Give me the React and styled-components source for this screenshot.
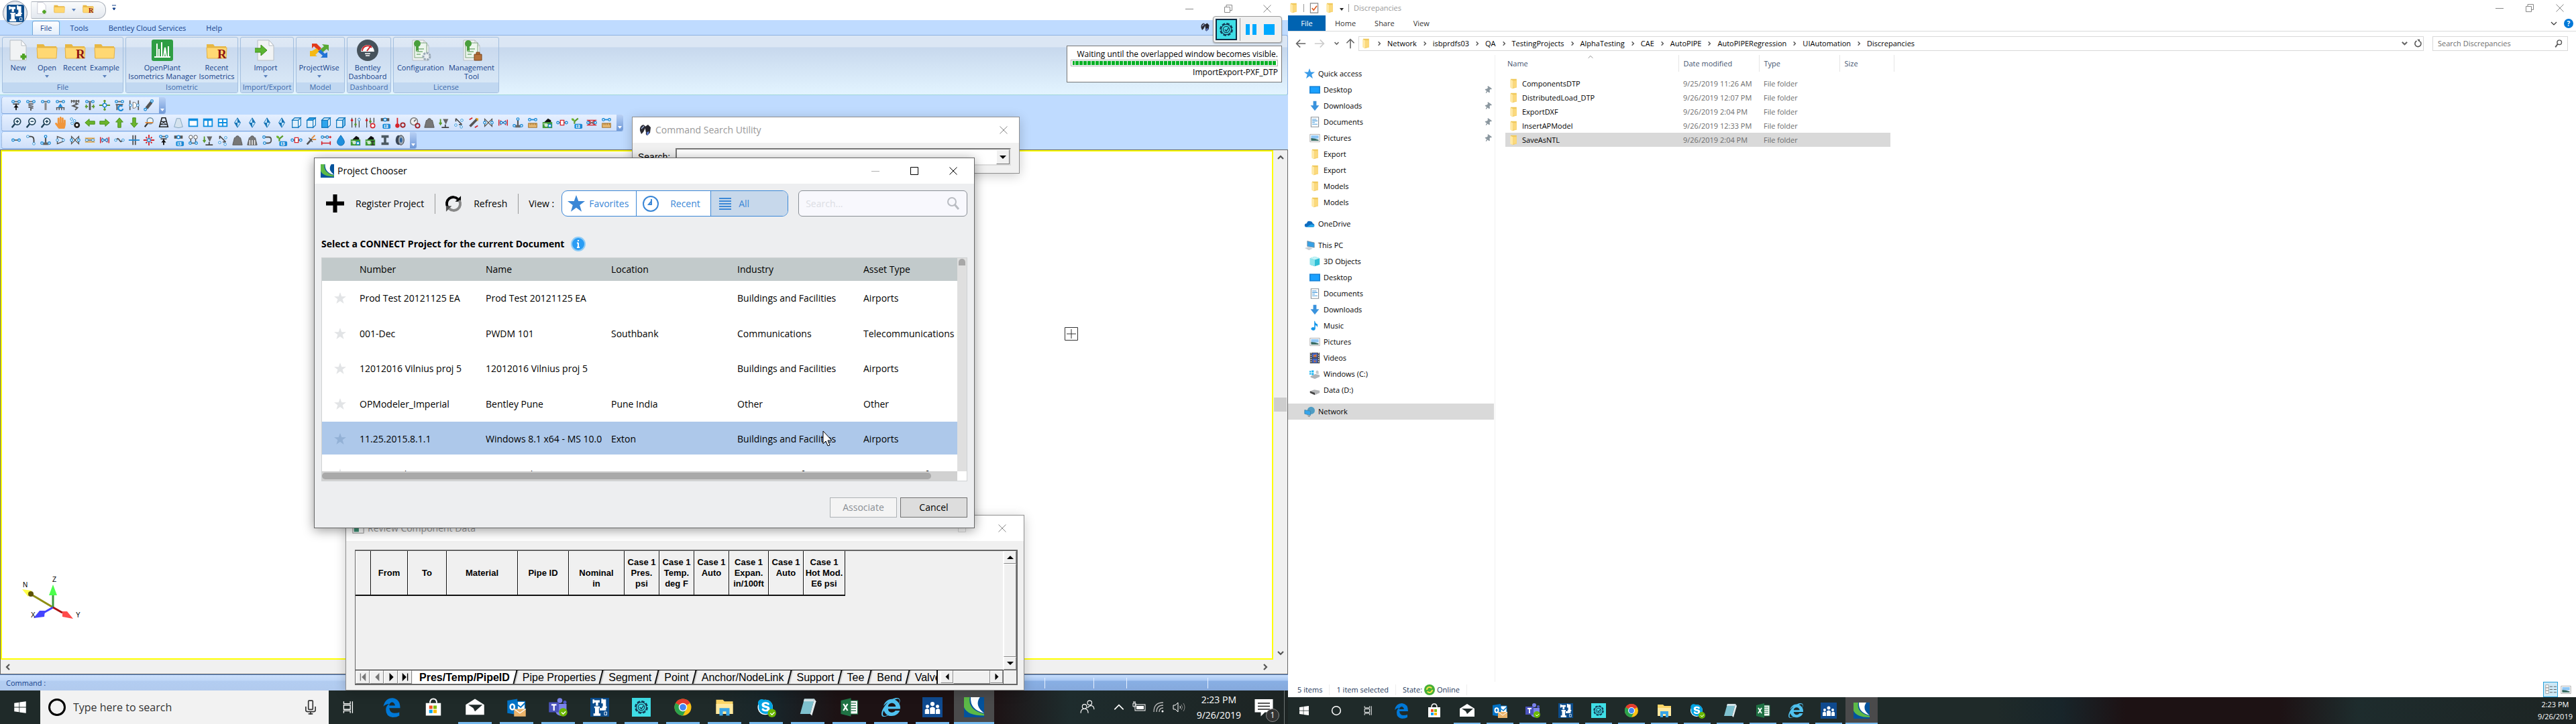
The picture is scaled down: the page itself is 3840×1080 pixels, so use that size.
import React from "react";
import styled, { createGlobalStyle, css } from "styled-components";
import { FaEdge, FaInternetExplorer, FaSkype, FaWindows, FaHandPaper, FaThumbtack } from "react-icons/fa";

const UI = `"Open Sans", "Noto Sans", sans-serif`;
const ARIAL = `"Liberation Sans", Arial, sans-serif`;

const Global = createGlobalStyle`
  *, *::before, *::after { box-sizing: border-box; }
  body { margin: 0; font-family: ${UI}; font-size: 11px; line-height: 16px; color: #000; overflow: hidden; }
  button, input { font: inherit; color: inherit; margin: 0; padding: 0; border: 0; background: none; border-radius: 0; outline: none; }
  button { cursor: default; display: inline-flex; align-items: center; justify-content: center; white-space: nowrap; }
  a { color: inherit; text-decoration: none; }
  svg { display: block; flex: none; }
`;

/* ---------- glyph helpers ---------- */

const BLUE = "#1b8ad6";
const Svg = ({ s = 20, v = 20, children, ...p }) => (
  <svg width={s} height={s} viewBox={`0 0 ${v} ${v}`} fill="none" aria-hidden="true" {...p}>{children}</svg>
);
const Nodes = ({ y = 10, c = "#666", a = 5, b = 15 }) => (
  <g>
    <path d={`M${a} ${y}H${b}`} stroke={c} strokeWidth="2" />
    <circle cx={a} cy={y} r="2" fill="#fff" stroke={BLUE} strokeWidth="1.5" />
    <circle cx={b} cy={y} r="2" fill="#fff" stroke={BLUE} strokeWidth="1.5" />
  </g>
);
const P = ({ d, c = "#555", w = 1.6, f = "none" }) => <path d={d} stroke={c} strokeWidth={w} fill={f} />;
const Info = () => (
  <g>
    <rect x="6" y="12" width="13" height="8" rx="2" fill={BLUE} />
    <text x="8" y="19" fontSize="8" fontWeight="700" fill="#fff" fontFamily="Open Sans, sans-serif">i3</text>
  </g>
);
const Magnifier = ({ sign }) => (
  <g>
    <circle cx="12" cy="8" r="5.5" stroke="#1d3f55" strokeWidth="1.8" fill="#eaf6ff" />
    <P d="M8 12L3 18" c="#1d3f55" w={2.6} />
    <P d={sign === "-" ? "M9.5 8h5" : "M9.5 8h5M12 5.500v5"} c="#1d3f55" w={1.6} />
  </g>
);
const Arrow = ({ r = 0 }) => (
  <path transform={`rotate(${r} 10 10)`} d="M2 10L9 4v3.500h9v5H9V16z" fill="#6cb52d" stroke="#3f8a14" />
);
const Weight = ({ c = "#777" }) => <path d="M7 6a3 3 0 1 1 6 0h2l3 12H2L5 6z" fill={c} stroke="#555" />;
const Gem = ({ r = 0 }) => (
  <g transform={`rotate(${r} 10 10)`}>
    <path d="M10 2l5 8-5 8-5-8z" fill="#bfe3fb" stroke="#1673b5" />
    <path d="M10 2l5 8h-5zM10 10v8L5 10z" fill="#1673b5" />
  </g>
);
const Cube = ({ face }) => (
  <g stroke="#0f77bd" strokeWidth="1.3" fill="#dff0fc">
    <path d="M3 6l4-4h10v12l-4 4H3z" />
    <path d="M3 6h10v12H3z" fill={face === "front" ? "#2ea5ec" : "#dff0fc"} />
    <path d="M3 6l4-4h10l-4 4z" fill={face === "top" ? "#2ea5ec" : "#dff0fc"} />
    <path d="M13 6l4-4v12l-4 4z" fill={face === "side" ? "#7cc4ee" : "#fff"} />
  </g>
);
const Win = ({ split }) => (
  <g>
    <rect x="2" y="3" width="16" height="14" fill="#0b8de0" />
    {split === 0 && <rect x="4" y="7" width="12" height="8" fill="#fff" />}
    {split === 1 && <path d="M4 7h5v8H4zM11 7h5v8h-5z" fill="#fff" />}
    {split === 2 && <path d="M4 5h5v4H4zM11 5h5v4h-5zM4 11h5v4H4zM11 11h5v4h-5z" fill="#fff" />}
  </g>
);
const Plant = () => (
  <g>
    <P d="M6 12V6M6 8l6-5" c="#5a9a2b" w={2.4} />
    <path d="M1 3q5-1 5 4Q1 8 1 3z" fill="#6cb52d" /><Info />
  </g>
);
const Yard = ({ tool }) => (
  <g>
    <path d="M5 9l6-6 5 3v4H5z" fill="#111" />
    <rect x="2" y="9" width="16" height="10" fill="#3f9a35" />
    <path d="M3 12h5" stroke="#fff" /><circle cx="8" cy="14" r="3" fill="#cfe8cf" />
    {tool ? <P d="M11 12h6M14 12v6M11 18h6" c="#333" w={1.8} /> : <circle cx="14" cy="15" r="2.500" fill="#fff" stroke={BLUE} strokeWidth="1.5" />}
  </g>
);
const Ruler = () => (
  <g>
    <Nodes y={5} c="#1b8ad6" />
    <rect x="3" y="11" width="14" height="7" fill="#e6b873" stroke="#9b6a22" />
    <P d="M6 11v3M9 11v3M12 11v3M15 11v3" c="#9b6a22" w={1} />
  </g>
);
const Valve = ({ c = "#555" }) => (
  <g>
    <path d="M4 4v12l12-12v12z" fill="#fff" stroke={c} strokeWidth="1.5" />
    <circle cx="4" cy="10" r="2" fill="#fff" stroke={BLUE} strokeWidth="1.4" /><circle cx="16" cy="10" r="2" fill="#fff" stroke={BLUE} strokeWidth="1.4" />
  </g>
);
const RedPipe = () => (
  <g><P d="M3 5v10M17 5v10M6 6v8M14 6v8" c="#d5232a" w={1.6} /><Nodes c="#d5232a" a={7} b={13} /></g>
);
const Twin = () => (
  <g>
    <P d="M2 7h16M2 13h16" c="#e39b2f" w={2} /><P d="M2 10h16" c="#777" w={2} />
    <circle cx="5" cy="10" r="2" fill="#fff" stroke={BLUE} /><circle cx="15" cy="10" r="2" fill="#fff" stroke={BLUE} />
  </g>
);
const Anchor = () => (
  <g><P d="M10 5v9" w={2.4} /><Nodes y={15} a={4} b={16} /><path d="M5 18l5-6 5 6z" fill="#666" /><circle cx="10" cy="4" r="2" fill="#fff" stroke={BLUE} strokeWidth="1.5" /></g>
);
const Sway = () => (
  <g><P d="M5 3l10 10M5 3v5M15 13h-5" c="#444" w={1.8} /><circle cx="5" cy="14" r="2" stroke={BLUE} fill="#fff" /><circle cx="15" cy="6" r="2" stroke={BLUE} fill="#fff" /><circle cx="14" cy="17" r="2" stroke={BLUE} fill="#fff" /></g>
);
const Drop = () => (
  <g><path d="M8 4h9l-4 9z" fill="#666" /><P d="M4 4v8M2 10l2 3 2-3" c="#5a9a2b" w={2} /><P d="M6 18h12M12 13v5" c="#444" w={2} /></g>
);
const Loop = () => (
  <g><P d="M6 5h7q4 0 4 5t-5 5H8" w={2} /><circle cx="5" cy="5" r="2" fill="#fff" stroke={BLUE} strokeWidth="1.4" /><circle cx="6" cy="15" r="2" fill="#fff" stroke={BLUE} strokeWidth="1.4" /></g>
);
const Tees = () => (
  <g><P d="M6 4v10M14 4v10" w={1.6} /><circle cx="6" cy="5" r="3" fill="#fff" stroke="#444" /><circle cx="14" cy="5" r="3" fill="#fff" stroke="#444" /><Nodes y={15} /></g>
);

const GLYPHS = {
  support: <g><Nodes y={4} /><P d="M10 7v5M5 8h10" c="#333" w={1.8} /><path d="M10 9l4 5h-3v4H9v-4H6z" fill="#111" /></g>,
  spring: <g><Nodes y={4} /><P d="M6 8h8M6 10l8 2M6 13l8 2M10 15v4" w={2} /></g>,
  rod: <g><Nodes y={4} /><P d="M10 6v12" c="#888" w={3.4} /></g>,
  guide: <g><Nodes y={4} /><path d="M10 7l4 6H6z" fill={BLUE} /><P d="M3 14h14M4 14v4M8 14v4M12 14v4M16 14v4" w={1.6} /></g>,
  hanger: <g><P d="M3 3h14M4 1v5M8 1v5M12 1v5M16 1v5" w={1.6} /><P d="M10 6l4 2-8 3 8 3-4 4" w={2} /></g>,
  limit: <g><Nodes y={4} /><P d="M10 5v13" w={3} /><P d="M2 12h5M13 12h5M4 9v6M16 9v6" c="#5a9a2b" w={2} /></g>,
  fourway: <g><P d="M10 1v6M10 13v6M1 10h6M13 10h6M8 3h4M8 17h4" c="#5a9a2b" w={2} /><circle cx="10" cy="10" r="3" fill="#fff" stroke={BLUE} strokeWidth="1.6" /></g>,
  hook: <g><Nodes y={4} /><P d="M4 9h12M6 9v9" w={2} /><path d="M15 12a4 4 0 1 0 1 4" stroke={BLUE} strokeWidth="2.4" /></g>,
  damper: <g><P d="M3 2v16M17 2v16" w={1.8} /><path d="M8 5q6 0 6 5t-6 5z" fill="#fff" stroke="#666" /><circle cx="4" cy="10" r="2" fill="#fff" stroke={BLUE} /><circle cx="16" cy="10" r="2" fill="#fff" stroke={BLUE} /></g>,
  strut: <g><P d="M6 15l8-10" w={5} /><circle cx="4" cy="17" r="2" fill="#fff" stroke={BLUE} strokeWidth="1.5" /><circle cx="15" cy="3" r="2" fill="#fff" stroke={BLUE} strokeWidth="1.5" /></g>,
  zoomin: <Magnifier sign="+" />, zoomout: <Magnifier sign="-" />,
  points: <g><circle cx="4" cy="4" r="2" stroke={BLUE} fill="#fff" /><circle cx="9" cy="7" r="2" stroke={BLUE} fill="#fff" /><circle cx="5" cy="11" r="2" stroke={BLUE} fill="#fff" /><circle cx="13" cy="14" r="5" fill="#222" /><circle cx="13" cy="14" r="2" fill="#fff" /></g>,
  left: <Arrow />, right: <Arrow r={180} />, up: <Arrow r={90} />, down: <Arrow r={270} />,
  orbit: <g><circle cx="12" cy="7" r="5" stroke="#6b8ca3" strokeWidth="1.6" fill="#eaf6ff" /><P d="M8 11l-5 6" c="#333" w={2.4} /><P d="M4 10h13" c="#e0812a" w={2} /></g>,
  frame: <g><P d="M7 2h6l4 15H3z" c="#222" w={1.8} /><P d="M5 8h10M4 13h12M7 8l7 5M13 8l-8 5" c="#222" w={1.2} /></g>,
  cone: <path d="M7 3h6l4 14q-7 3-14 0z" fill="#d5e3ee" stroke="#7fa3bd" />,
  w0: <Win split={0} />, w1: <Win split={1} />, w2: <Win split={2} />,
  g0: <Gem />, g1: <Gem r={180} />, cube: <Cube />, cubetop: <Cube face="top" />, cubefront: <Cube face="front" />, cubeside: <Cube face="side" />,
  sliders: <g><P d="M4 2v16M10 2v16M16 2v16" c="#444" w={1.4} /><circle cx="4" cy="6" r="2" fill="#d5232a" /><circle cx="10" cy="13" r="2" fill="#5a9a2b" /><circle cx="16" cy="5" r="2" fill="#fff" stroke={BLUE} /></g>,
  sliderspower: <g><P d="M4 2v16M10 2v10M16 2v8" c="#444" w={1.4} /><circle cx="4" cy="6" r="2" fill="#d5232a" /><circle cx="10" cy="8" r="2" fill="#5a9a2b" /><circle cx="14" cy="15" r="3.500" stroke="#d5232a" strokeWidth="1.8" fill="#fff" /></g>,
  pipeinfo: <g><P d="M3 5h14" w={5} /><circle cx="10" cy="5" r="2.500" fill="#fff" stroke={BLUE} strokeWidth="1.5" /><Info /></g>,
  thermo: <g><P d="M6 2v12" c="#d5232a" w={2} /><circle cx="6" cy="15" r="3.500" fill="#d5232a" /><circle cx="15" cy="14" r="3.500" stroke="#a01c20" strokeWidth="2" /></g>,
  gauge: <g><circle cx="9" cy="8" r="6" fill="#eee" stroke="#777" strokeWidth="1.6" /><P d="M9 8l3-3" /><circle cx="15" cy="15" r="3.500" stroke="#a01c20" strokeWidth="2" /></g>,
  weight: <Weight />, weights: <g><Weight /><P d="M6 10v8M10 10v8M14 10v8" c="#fff" w={1.4} /></g>, dropload: <Drop />, sway: <Sway />,
  shake: <g><P d="M4 16L16 4" w={4} /><P d="M3 5l5-3M12 18l5-3" c="#d5232a" w={2} /><path d="M13 2l5 1-1 5z" fill="#e9a11c" /></g>,
  valve: <Valve />, redpipe: <RedPipe />, anchor: <Anchor />, ruler: <Ruler />, yard: <Yard />, yardtool: <Yard tool />,
  boxlink: <g><Nodes a={3} b={17} /><rect x="7" y="6" width="6" height="8" fill="#fff" stroke="#d5232a" strokeWidth="1.4" /></g>,
  plant: <Plant />, rednet: <g><P d="M2 6h16M2 14h16M4 6l12 8M16 6L4 14" c="#d5232a" w={1.6} /><Nodes c="#777" a={4} b={16} /></g>,
  run: <Nodes a={5} b={15} />, bend: <g><P d="M3 4h7q5 0 5 6v6" c="#444" w={2} /><circle cx="5" cy="4" r="2" fill="#fff" stroke={BLUE} /><circle cx="15" cy="16" r="2" fill="#fff" stroke={BLUE} /></g>,
  reducer: <g><P d="M5 4l10 4v4L5 16z" /><circle cx="5" cy="10" r="2" fill="#fff" stroke={BLUE} /><circle cx="15" cy="10" r="2" fill="#fff" stroke={BLUE} /></g>,
  twin: <Twin />, flex: <g><P d="M5 10q2-5 5 0t5 0" w={2} /><circle cx="4" cy="10" r="2" fill="#fff" stroke={BLUE} /><circle cx="16" cy="10" r="2" fill="#fff" stroke={BLUE} /></g>,
  flange: <g><P d="M8 2v16M12 2v16" w={2} /><P d="M1 10h18" c={BLUE} w={2} /></g>,
  star: <g><P d="M10 1v6M10 13v6M1 10h6M13 10h6M5 5l2 2M15 5l-2 2M5 15l2-2M15 15l-2-2" c="#d5232a" w={2} /><circle cx="10" cy="10" r="2.500" stroke={BLUE} fill="#fff" strokeWidth="1.5" /></g>,
  tees: <Tees />, loop: <Loop />,
  spray: <g><P d="M3 17l8-9" w={3} /><P d="M11 7l5-5M12 9h6" c="#e0812a" w={2} /><P d="M6 6l6 7" /></g>,
  dim: <g><Nodes y={5} a={4} b={12} /><P d="M3 15h14M3 12v6M17 12v6" c="#d5232a" w={1.8} /><P d="M14 5h5M17 3v4" c="#d5232a" w={1.4} /></g>,
  water: <path d="M10 2q6 8 6 11a6 6 0 0 1-12 0q0-3 6-11z" fill="#1f8fdd" stroke="#0f6bb0" />,
  beam: <path d="M4 2h12v4h-4v8h4v4H4v-4h4V6H4z" fill="#4c5961" />,
  disc: <g><ellipse cx="8" cy="10" rx="5" ry="8" fill="#3c4a5c" /><ellipse cx="12" cy="10" rx="5" ry="8" fill="#9aa7b3" stroke="#333" /><ellipse cx="12" cy="10" rx="2" ry="4" fill="#2b62a0" /></g>,
};
const Hand = styled(FaHandPaper)`width: 16px; height: 18px; color: #f0963c;`;
const Glyph = ({ n }) => (n === "hand" ? <Hand /> : <Svg s={18}>{GLYPHS[n]}</Svg>);

const BentleyMark = ({ s }) => (
  <Svg s={s} v={24}>
    <rect width="24" height="24" fill="#03529c" />
    <path d="M0 0h7q-3 15 17 20v2Q4 22 0 12z" fill="#5cb947" />
    <path d="M8 0h11q-7 10 5 19Q7 15 8 0z" fill="#fff" />
  </Svg>
);
const PipeMark = ({ s }) => (
  <Svg s={s} v={24}>
    <rect width="24" height="24" fill="#0b4c8c" />
    <path d="M3 2h2v5H3zM3 3h9v3H3zM14 1h2v6h-2zM16 2h4v9h-4zM15 11h6v2h-6zM16 13h4v3h-8v-3h4zM7 6h3v4H7zM5 11h7v2H5zM6 13h5v7H6zM4 20h9v3H4z" fill="#fff" />
    <path d="M18 18h3v4h-3z" stroke="#fff" strokeWidth=".8" />
  </Svg>
);
const GearMark = ({ s }) => (
  <Svg s={s} v={24}>
    <rect width="24" height="24" fill="#3fdee6" />
    <circle cx="12" cy="12" r="7.500" stroke="#123a55" strokeWidth="2" strokeDasharray="3.900 2" />
    <circle cx="12" cy="12" r="6.500" stroke="#123a55" strokeWidth="1" />
    <circle cx="12" cy="12" r="4" stroke="#123a55" strokeWidth="1" />
    <path d="M10 12l2 2 3-4" stroke="#123a55" strokeWidth="1.2" />
  </Svg>
);
const Binoculars = ({ s = 18 }) => (
  <Svg s={s}>
    <path d="M2 11Q1 4 7 2l4 3-4 8-3 3z" fill="#2b2b33" /><path d="M10 9q-1-5 4-7l4 4-1 8-4 4q-3-1-2-4z" fill="#26262e" />
    <path d="M12 13l4-1-1 4-3 2z" fill="#5b78c8" /><path d="M4 8l4-4" stroke="#9fb3de" strokeWidth="1.5" />
  </Svg>
);
const Page = ({ children }) => (
  <Svg s={32} v={32}>
    <path d="M4 1h17l7 8v22H4z" fill="#f1f3f4" stroke="#b7bec4" /><path d="M21 1v8h7z" fill="#fff" stroke="#b7bec4" />{children}
  </Svg>
);
const BigFolder = ({ s = 32, r }) => (
  <Svg s={s} v={32}>
    <path d="M1 7h10l2 3h17v17H1z" fill="#e8b844" /><path d="M1 12h30l-1 16H2z" fill="#ffd873" stroke="#e2b24a" />
    {r && <text x="17" y="28" fontSize="19" fill="#8d1414" fontFamily="Liberation Serif, serif" fontWeight="700">R</text>}
  </Svg>
);
const License = ({ tool }) => (
  <Page>
    <rect x="7" y="5" width="18" height="22" stroke="#7ca37c" fill="#edf6ee" /><path d="M10 14h11M10 18h9M10 22h6" stroke="#7eb07e" strokeWidth="1.4" />
    <circle cx="11" cy="6" r="5" fill="#4a9f3c" /><path d="M9 10h4v8l-2-2-2 2z" fill="#4a9f3c" />
    {tool ? <path d="M20 22h11v9H20zM23 22v-3h5v3" fill="#b5713a" stroke="#7c4519" /> : <circle cx="25" cy="25" r="5" fill="#e8edf1" stroke="#98a7b5" strokeWidth="3" strokeDasharray="3 1.500" />}
  </Page>
);
const RIBBON = {
  new: <Page><path d="M24 21v9M19.500 25.500h9" stroke="#4fa324" strokeWidth="4" /></Page>,
  folder: <BigFolder />, folderR: <BigFolder r />,
  plant: <Svg s={32} v={32}><rect width="32" height="32" rx="3" fill="#2f9e44" /><path d="M4 26h24M8 26V6M11 26V14M15 26V4M18 26l2-14 2 14M25 26V10" stroke="#fff" strokeWidth="2" /></Svg>,
  import: <Page><path d="M-1 13h10V8l9 8-9 8v-5H-1z" fill="#5cb531" stroke="#3c8a18" /></Page>,
  pw: <Svg s={32} v={32}><path d="M5 6l7 0 7 7-4 4-7-7-3 3z" fill="#e23b1c" /><path d="M30 8v9l-3-3-7 6-4-4 7-6-3-3z" fill="#57a834" /><path d="M2 17l3 0 7-4 4 4-6 6 3 2H2z" fill="#f5b915" /><path d="M14 18l4-3 6 6 4-2v8h-10l3-3z" fill="#2273d6" /></Svg>,
  dash: <Svg s={32} v={32}><circle cx="16" cy="16" r="16" fill="#46525b" /><path d="M6 18a10 10 0 0 1 20 0z" fill="#fff" /><path d="M8 17a8 8 0 0 1 14-5" stroke="#cf2327" strokeWidth="2" /><path d="M15 17l6-8" stroke="#cf2327" strokeWidth="2" /><path d="M12 21h8M13 24h6" stroke="#fff" strokeWidth="1.500" /></Svg>,
  config: <License />, manage: <License tool />,
};

/* ---------- desktop ---------- */

const Desktop = styled.main`display: grid; grid-template-columns: 1fr 1fr; height: 100vh; background: #fff;`;
const Monitor = styled.section`position: relative; display: flex; flex-direction: column; min-width: 0; min-height: 0; overflow: hidden; background: ${(p) => p.$bg || "#fff"};`;

/* ---------- AutoPIPE main window ---------- */

const TitleStrip = styled.header`height: 30px; flex: none; display: flex; align-items: flex-start; justify-content: space-between; background: #fff; padding-left: 46px;`;
const QuickBar = styled.div`display: flex; align-items: center; gap: 9px; margin-top: 2px; width: 112px; height: 26px; padding: 0 6px 6px; border: 1px solid #a8afb8; border-left-color: #d5d9df; border-radius: 2px 12px 12px 2px; background: linear-gradient(#fafbfc, #e3e8ef);`;
const QuickGroup = styled.div`display: flex; align-items: center; gap: 10px;`;
const QuickMore = styled.button`width: 10px; height: 24px; margin-left: 7px;`;
const Orb = styled.button`position: absolute; z-index: 2; left: 4px; top: 1px; width: 37px; height: 37px; && { border-radius: 50%; background: radial-gradient(#fff 40%, #b9c3d2); border: 1px solid #8793a5; } svg { border-radius: 3px; }`;
const WinControls = styled.div`display: flex; height: ${(p) => p.$h || 26}px; padding-right: 2px; color: ${(p) => p.$c || "#888"}; button { width: ${(p) => p.$w || 58}px; }`;
const Dim = styled.span`display: flex; opacity: 0.3;`;
const CtlIcon = ({ k, s = 12 }) => (
  <Svg s={s} v={12}>
    {k === "min" && <path d="M0 6.500h12" stroke="currentColor" />}
    {k === "max" && <path d="M.5.5h11v11H.5z" stroke="currentColor" />}
    {k === "rest" && <path d="M.5 3.500h8v8h-8zM3 3V.5h8.500v8H9" stroke="currentColor" />}
    {k === "x" && <path d="M.5.5l11 11M11.500.5l-11 11" stroke="currentColor" />}
  </Svg>
);
const Controls = ({ max = "rest", ...p }) => (
  <WinControls {...p}>
    <button aria-label="Minimize"><CtlIcon k="min" /></button>
    <button aria-label="Restore"><CtlIcon k={max} /></button>
    <button aria-label="Close"><CtlIcon k="x" /></button>
  </WinControls>
);

const TabStrip = styled.nav`height: 22px; flex: none; display: flex; align-items: stretch; padding: 1px 8px 0 48px; background: #bfdbff; color: #15428b;`;
const RibbonTab = styled.button`
  && { height: 21px; padding: 0 15px; }
  ${(p) => p.$on && css`&& { background: linear-gradient(#fff, #e3eefb); border: 1px solid #7ba7d9; border-bottom: 0; border-radius: 3px 3px 0 0; padding: 0 11px; box-shadow: 0 0 3px #8fe6f5; }`}
`;
const Ribbon = styled.div`flex: none; display: flex; gap: 3px; height: 90px; padding: 2px 3px; border: 1px solid #8db2e3; border-left: 0; border-bottom-color: #9fd6d8; border-radius: 0 3px 3px 0; background: linear-gradient(#dbe6f4 0, #dbe6f4 17px, #c7d8ed 18px, #e3f4ff 100%);`;
const RibbonGroup = styled.section`display: flex; flex-direction: column; height: 84px; border: 1px solid #a3bfdf; border-radius: 3px; overflow: hidden; background: linear-gradient(#dfe9f5 0, #dbe6f4 14px, #c9d9ee 15px, #dcebf8 100%);`;
const GroupBody = styled.div`flex: 1; display: flex; padding: 0 4px 0 0; min-height: 0;`;
const GroupName = styled.div`height: 15px; line-height: 14px; text-align: center; background: #c1d8f1; color: #3e6aaa;`;
const BigButton = styled.button`&& { flex-direction: column; justify-content: flex-start; width: ${(p) => p.$w}px; padding-top: 3px; color: #15428b; line-height: 13px; white-space: pre; } span { margin-top: 3px; text-align: center; }`;
const Caret = styled.i`display: block; width: 0; height: 0; margin-top: 5px; border: 3px solid transparent; border-top: 4px solid ${(p) => p.$c || "#5b82bd"}; border-bottom: 0;`;

const GROUPS = [
  ["File", [["new", "New", 46], ["folder", "Open", 40, 1], ["folderR", "Recent", 43], ["folder", "Example", 46, 1]]],
  ["Isometric", [["plant", "OpenPlant\nIsometrics Manager", 108], ["folderR", "Recent\nIsometrics", 54]]],
  ["Import/Export", [["import", "Import", 74, 1]]],
  ["Model", [["pw", "ProjectWise", 67, 1]]],
  ["Dashboard", [["dash", "Bentley\nDashboard", 60]]],
  ["License", [["config", "Configuration", 80], ["manage", "Management\nTool", 72]]],
];

const ToolDock = styled.div`flex: none; height: 81px; display: flex; flex-direction: column; align-items: flex-start; gap: 1px; padding: 3px 2px 0; background: #bfdbff;`;
const ToolRow = styled.div`display: flex; align-items: center; height: 25px; padding-left: 10px; border-bottom: 1px solid #7ea5dc; border-radius: 3px; background: linear-gradient(#e6f0ff, #cfe0fa); border-left: 1px dotted #6f92c4; button { width: 22px; height: 24px; }`;
const Overflow = styled.span`align-self: stretch; width: 10px; margin-left: 4px; display: flex; align-items: flex-end; justify-content: center; padding-bottom: 3px; border-radius: 0 3px 3px 0; background: linear-gradient(#b9d1f5, #6f99d8);`;
const ROWS = [
  "support spring rod guide hanger limit fourway hook damper strut",
  "zoomin zoomout zoomin hand points left right up down orbit frame cone w0 w1 w2 g0 g0 g1 g1 cube cubetop cubefront cubeside sliders sliderspower pipeinfo thermo gauge weight dropload sway shake valve redpipe anchor ruler yard boxlink plant rednet ruler",
  "run bend anchor reducer valve twin redpipe flex flange star support pipeinfo tees dropload sway weight weights loop plant boxlink spray dim water yard yardtool beam disc",
];

const CanvasFrame = styled.section`flex: 1; min-height: 0; display: grid; grid-template: 1fr 21px / 1fr 21px; border: 1px solid #666; background: #f0f0f0;`;
const Canvas = styled.div`position: relative; border: 2px solid #ff0; background: #fff;`;
const Axes = styled.svg`position: absolute; left: 28px; bottom: 47px;`;
const Cross = styled.svg`position: absolute; left: 1582px; top: 260px;`;
const ScrollTrack = styled.div`display: flex; flex-direction: ${(p) => (p.$v ? "column" : "row")}; align-items: center; justify-content: space-between; padding: ${(p) => (p.$v ? "5px 0 4px" : "0 4px 0 5px")}; color: #555; grid-column: ${(p) => (p.$v ? 2 : "1 / 3")};`;
const VThumb = styled.div`width: 19px; height: 21px; margin-bottom: 8px; background: #cdcdcd;`;
const Spacer = styled.div`flex: ${(p) => p.$f || 1};`;
const Chev = ({ r = 0, s = 12, w = 2.2 }) => <Svg s={s} v={12}><path transform={`rotate(${r} 6 6)`} d="M2 8l4-4 4 4" stroke="currentColor" strokeWidth={w} /></Svg>;
const StatusBar = styled.footer`flex: none; display: flex; align-items: center; height: 24px; padding: 0 119px 0 9px; color: #15428b; border-top: 1px solid #5c86c5; background: linear-gradient(90deg, #cfe1fa99 25%, #cfe1fa00 80%), linear-gradient(#c8defb, #a9c8f3 8px, #88afe4 9px, #86a9dc);`;
const StatusCell = styled.span`width: ${(p) => p.$w}px; height: 16px; border-left: 1px solid #e6f0ff;`;

/* ---------- recorder overlay ---------- */

const Recorder = styled.div`position: absolute; z-index: 5; right: 9px; top: 24px; width: 103px; height: 40px; display: flex; align-items: center; gap: 4px; padding: 0 3px; border: 1px solid #9c9c9c; border-radius: 4px; background: #f0f0f0; box-shadow: 0 1px 2px #0004;`;
const TealButton = styled.button`width: 32px; height: 32px; && { border: 2px solid #0f2d45; background: #3fdee6; }`;
const Rule = styled.span`width: 1px; height: ${(p) => p.$h}px; background: ${(p) => p.$c || "#999"};`;
const Pause = styled.button`width: 16px; height: 16px; && { margin-left: 4px; border: solid #00a9ff; border-width: 0 6px; }`;
const Stop = styled.button`width: 16px; height: 16px; && { margin-left: 7px; background: #00a9ff; }`;
const FindSlot = styled.span`position: absolute; right: 116px; top: 33px;`;
const Balloon = styled.div`position: absolute; z-index: 5; right: 9px; top: 68px; width: 321px; height: 55px; padding: 4px 5px; border: 1px solid #777; background: #fff; text-align: right; font-size: 12px; line-height: 16px; white-space: nowrap;`;
const Progress = styled.div`height: 10px; border: 1px solid #b5b5b5; background: repeating-linear-gradient(90deg, #06b025 0 5px, #fff 5px 6px); background-clip: content-box; padding: 1px 2px; margin-bottom: 1px;`;

/* ---------- dialogs ---------- */

const Dialog = styled.section`position: absolute; left: ${(p) => p.$x}px; top: ${(p) => p.$y}px; width: ${(p) => p.$w}px; height: ${(p) => p.$h}px; display: flex; flex-direction: column; border: 1px solid ${(p) => (p.$front ? "#666" : "#8f8f8f")}; background: ${(p) => (p.$front ? "#edeef0" : "#f0f0f0")}; box-shadow: 0 3px 16px ${(p) => (p.$front ? "#0006" : "#0003")}; overflow: hidden; font-size: 14px;`;
const DialogTitle = styled.header`flex: none; height: 38px; display: flex; align-items: center; background: #fff; padding-left: 9px; color: ${(p) => (p.$front ? "#000" : "#999")}; h2 { flex: 1; margin: 0 0 0 5px; font-size: 14px; font-weight: 400; }`;

const SearchLine = styled.div`display: flex; align-items: center; gap: 8px; padding: 8px 12px 10px 8px; font-family: ${ARIAL};`;
const Combo = styled.div`flex: 1; display: flex; height: 26px; border: 2px solid #777; border-color: #777 #ddd #ddd #777; background: #fff; input { flex: 1; min-width: 0; } button { width: 20px; background: #f0f0f0; border: 1px solid; border-color: #fff #777 #777 #fff; }`;
const Tri = styled.i`display: block; width: 0; height: 0; border: 5px solid transparent; border-top: 5px solid #000; border-bottom: 0; transform: rotate(${(p) => p.$r || 0}deg);`;

const ChooserBody = styled.div`flex: 1; display: flex; flex-direction: column; padding: 10px 10px 15px;`;
const ChooserBar = styled.div`display: flex; align-items: center; height: 39px; margin-left: 7px;`;
const BarButton = styled.button`gap: 17px; && { margin-right: 16px; }`;
const Segments = styled.div`display: flex; width: 338px; height: 39px; margin: 0 15px 0 11px; border: 1px solid #3b87d6; border-radius: 9px; overflow: hidden; background: #fff; color: #3b87d6;`;
const Segment = styled.button`flex: 1; && { justify-content: flex-start; padding-left: ${(p) => p.$pl || 8}px; } gap: ${(p) => p.$gap || 6}px; & + & { border-left: 1px solid #3b87d6; } ${(p) => p.$on && css`&& { background: #c7d8eb; }`}`;
const SearchBox = styled.label`flex: 1; height: 39px; display: flex; align-items: center; padding: 0 10px; border: 1px solid #8a8f96; border-radius: 6px; background: #f8f8fd; color: #b9bcc2; input { flex: 1; min-width: 0; } input::placeholder { color: #dcdee4; opacity: 1; }`;
const ChooserHead = styled.h3`display: flex; align-items: center; gap: 10px; height: 24px; margin: 29px 0 8px; font-size: 14px; font-weight: 700;`;
const Grid = styled.div`height: 334px; display: grid; grid-template: minmax(0, 1fr) 14px / minmax(0, 1fr) 14px; border: 1px solid #cfd2d3; background: #fff;`;
const GridView = styled.div`overflow: hidden;`;
const ProjectTable = styled.table`
  width: 995px; table-layout: fixed; border-collapse: collapse; border-spacing: 0; text-align: left;
  th, td { padding: 0 8px 0 0; overflow: hidden; white-space: nowrap; font-weight: 400; }
  th { height: 34px; background: #c2cacb; }
  td:last-child { padding-right: 0; }
  td:first-child { padding-left: 18px; color: #e2e4e6; }
`;
const ProjectRow = styled.tr`height: ${(p) => p.$h}px; ${(p) => p.$on && css`background: linear-gradient(#adc8ea, #adc8ea) 0 0 / 100% 49px no-repeat; && td:first-child { color: #93b1d6; }`}`;
const VBar = styled.div`background: #dfdfdf; grid-row: 1; grid-column: 2; padding: 1px 2px; &::before { content: ""; display: block; height: 10px; border-radius: 5px 5px 0 0; background: #a8a8a8; }`;
const HBar = styled.div`background: #d1d1d1; padding: 2px 39px 2px 0; &::before { content: ""; display: block; height: 10px; border-radius: 5px; background: #a9a9a9; }`;
const DialogButtons = styled.footer`display: flex; justify-content: flex-end; gap: 5px; margin-top: auto; button { width: 100px; height: 30px; border: 1px solid #707070; background: #ddd; } button:disabled { color: #8a8f94; border-color: #adb2b5; background: #f4f4f4; }`;
const Star = ({ s, c = "currentColor" }) => <Svg s={s}><path d="M10 0l2.500 7H20l-6 4.500L16.200 19 10 14.500 3.800 19 6 11.500 0 7h7.500z" fill={c} /></Svg>;
const Pointer = styled.svg`position: absolute; z-index: 6; left: 1226px; top: 642px;`;

const PROJECTS = [
  [52, "Prod Test 20121125 EA", "Prod Test 20121125 EA", "", "Buildings and Facilities", "Airports"],
  [53, "001-Dec", "PWDM 101", "Southbank", "Communications", "Telecommunications I"],
  [52, "12012016 Vilnius proj 5", "12012016 Vilnius proj 5", "", "Buildings and Facilities", "Airports"],
  [53, "OPModeler_Imperial", "Bentley Pune", "Pune India", "Other", "Other"],
  [52, "11.25.2015.8.1.1", "Windows 8.1 x64 - MS 10.0", "Exton", "Buildings and Facilities", "Airports"],
  [53, "CvTestUpdateNUMB", "CvTestUpdateNAME", "CTC TEST", "Discrete Manufacturing", "Process Manufacturing"],
];

const ReviewBody = styled.div`flex: 1; display: grid; grid-template: 1fr 21px / 1fr 20px; margin: 13px 9px 7px 13px; border: 1px solid #666; border-width: 2px 2px 2px 1px; font-family: ${ARIAL}; overflow: hidden;`;
const CaseTable = styled.table`
  align-self: start; justify-self: start; table-layout: fixed; border-collapse: separate; border-spacing: 0; width: 730px; height: 67px; font-size: 13px; line-height: 16px;
  th { padding: 0; border: solid #111; border-width: 0 1px 2px 0; box-shadow: inset 1px 1px #fff; white-space: pre; }
`;
const CASES = [[23, ""], [55, "From"], [58, "To"], [106, "Material"], [76, "Pipe ID"], [83, " \nNominal\nin"], [52, "Case 1\nPres.\npsi"], [52, "Case 1\nTemp.\ndeg F"], [52, "Case 1\nAuto\n "], [59, "Case 1\nExpan.\nin/100ft"], [52, "Case 1\nAuto\n "], [62, "Case 1\nHot Mod.\nE6 psi"]];
const raised = css`background: #f0f0f0; border: 1px solid; border-color: #fff #888 #888 #fff;`;
const OldScroll = styled.div`display: flex; flex-direction: ${(p) => (p.$v ? "column" : "row")}; border-left: 1px solid #fff; > button { flex: none; ${raised} width: 19px; height: 19px; } > span { flex: 1; ${raised} }`;
const SheetScroll = styled(OldScroll)`width: 94px; flex: none;`;
const Corner = styled.div`border: 1px solid #666; border-width: 1px 0 0 1px;`;
const SheetTabs = styled.div`display: flex; min-width: 0; overflow: hidden; border-top: 1px solid #000;`;
const SheetNav = styled.div`display: flex; flex: none; button { ${raised} width: 21px; } `;
const SheetList = styled.div`display: flex; flex: 1; min-width: 0; overflow: hidden; border-right: 2px solid #111; margin-left: 1px;`;
const SheetTab = styled.button`
  position: relative; flex: none; && { padding: 0 9px 0 10px; font-size: 16px; line-height: 19px; } ${(p) => p.$on && css`&& { background: #fff; font-weight: 700; }`}
  &::after { content: ""; position: absolute; right: -2px; top: 0; bottom: 0; width: 4px; border-left: 2px solid #111; background: #ccc; transform: skewX(-14deg); }
`;

/* ---------- explorer ---------- */

const ExpTitle = styled.header`flex: none; display: flex; align-items: center; gap: 7px; height: 23px; padding-left: 0; color: #999; h1 { flex: 1; margin: 0; font-size: 11px; font-weight: 400; }`;
const ExpTabs = styled.nav`flex: none; display: flex; align-items: center; height: 24px; padding-right: 4px; border-bottom: 1px solid #dadbdc; color: #333; > button { height: 23px; padding: 0 14px; } > button:first-child { width: 56px; padding: 0; background: #0063b1; color: #fff; }`;
const AddressRow = styled.div`flex: none; display: flex; align-items: center; height: 35px; padding: 0 12px 0 11px; color: #666; > button { width: 16px; margin-right: 12px; }`;
const Address = styled.nav`flex: 1; display: flex; align-items: center; height: 22px; margin-right: 13px; padding-left: 2px; border: 1px solid #d9d9d9; color: #000; i { width: 24px; display: flex; justify-content: center; color: #555; }`;
const AddressEnd = styled.div`display: flex; align-items: center; height: 20px; margin-left: auto; color: #666; button { width: 16px; height: 20px; } button + button { border-left: 1px solid #d9d9d9; }`;
const ExpSearch = styled.label`width: 202px; height: 22px; display: flex; align-items: center; padding: 0 7px; border: 1px solid #d9d9d9; input { flex: 1; min-width: 0; } input::placeholder { color: #6d6d6d; opacity: 1; }`;
const ExpMain = styled.div`flex: 1; display: flex; min-height: 0;`;
const NavPane = styled.nav`width: 309px; flex: none; padding: 16px 1px 0 0; border-right: 1px solid #f0f0f0;`;
const NavItem = styled.a`display: flex; align-items: center; gap: 5px; height: 24px; margin-top: ${(p) => (p.$top ? 8 : 0)}px; padding: 0 4px 0 ${(p) => (p.$d ? 32 : 24)}px; background: ${(p) => (p.$on ? "#d9d9d9" : "none")}; > svg:last-child:not(:first-child) { margin-left: auto; }`;
const Pin = styled(FaThumbtack)`width: 10px; height: 11px; color: #8b979f; transform: rotate(35deg);`;
const ListPane = styled.section`flex: 1; min-width: 0; padding: 0 0 0 15px;`;
const FileTable = styled.table`
  border-collapse: collapse; table-layout: fixed; width: 579px; text-align: left; color: #6d6d6d;
  th, td { font-weight: 400; padding: 0 0 0 7px; white-space: nowrap; }
  th { position: relative; height: 25px; color: #44546f; border-right: 1px solid #e5e5e5; } th:first-child { padding-left: 3px; }
  td { height: 21px; } td:first-child { color: #000; padding-left: 4px; }
  th svg { position: absolute; left: 122px; top: -2px; color: #777; }
  tbody::before { content: ""; display: block; height: 7px; }
`;
const FileRow = styled.tr`background: ${(p) => (p.$on ? "linear-gradient(#d9d9d9, #d9d9d9) 0 0 / 574px 100% no-repeat" : "none")};`;
const FileName = styled.span`display: flex; align-items: center; gap: 5px;`;
const ExpStatus = styled.footer`flex: none; display: flex; align-items: center; height: 23px; padding-left: 14px; color: #1e395b; span { display: flex; align-items: center; gap: 3px; padding-right: 10px; margin-right: 10px; border-right: 1px solid #eee; }`;
const ViewButtons = styled.div`display: flex; align-items: center; gap: 4px; margin-left: auto; padding-right: 7px; button { height: 23px; } button:first-child { width: 22px; border: 1px solid #26a0da; background: #cce8f6; }`;
const Help = styled.button`width: 14px; && { padding: 0; height: 14px; border-radius: 50%; background: #0078d7; color: #fff; font-weight: 700; font-size: 10px; }`;
const SlimButton = styled.button`&& { width: 10px; margin-right: 8px; }`;
const UpButton = styled.button`&& { margin-right: 4px; }`;

const MiniFolder = () => <Svg s={16}><path d="M5 1h11v16l-8 2-3-2z" fill="#f0c95c" /><path d="M4 2l5 2v15l-5-2z" fill="#ffe9a6" /><path d="M9 4h7v13H9z" fill="#fbd97d" /></Svg>;
const NAVI = {
  star: <Star s={16} c="#3a9be8" />, folder: <MiniFolder />,
  desktop: <Svg s={16}><rect y="3" width="20" height="14" fill="#1583d8" /><rect x="2" y="5" width="16" height="10" fill="#1ba1ff" /></Svg>,
  down: <Svg s={16}><path d="M7 1h6v8h5l-8 10-8-10h5z" fill="#3a93dd" /></Svg>,
  doc: <Svg s={16}><path d="M3 1h14v18H3z" fill="#fff" stroke="#8b9299" strokeWidth="1.4" /><path d="M5 5h8M5 8h10M5 11h5M5 14h10" stroke="#4a9ad9" strokeWidth="1.4" /></Svg>,
  pic: <Svg s={16}><path d="M1 3h18v14H1z" fill="#fff" stroke="#9b9b9b" /><path d="M3 5h14v6H3z" fill="#8fc7f5" /><path d="M3 10l7 1 7 2v2H3z" fill="#386b62" /></Svg>,
  cloud: <Svg s={16}><path d="M1 13q0-4 4-4 1-5 6-4 4 0 5 4 4 1 3 5-1 2-3 2H4q-3 0-3-3z" fill="#0f6cbf" /><path d="M4 16l9-5q6 0 6 3 0 2-3 2z" fill="#28a8ea" /></Svg>,
  pc: <Svg s={16}><path d="M6 2l13 3v9L6 12z" fill="#37a0e4" stroke="#7c8e9c" /><path d="M1 15l7-2 8 3-7 3z" fill="#c9d0d5" /></Svg>,
  cube: <Svg s={16}><path d="M1 4l9-3 9 3v12l-9 3-9-3z" fill="#2fbfd6" /><path d="M1 4l9 3v12l-9-3z" fill="#8fe4ec" /><path d="M1 4l9-3 9 3-9 3z" fill="#c4f4f6" /></Svg>,
  music: <Svg s={16}><path d="M10 1q1 5 5 6 1 3-1 6 0-4-3-4v7a4 3 0 1 1-2-3V1z" fill="#1496ea" /></Svg>,
  video: <Svg s={16}><rect x="1" width="18" height="20" fill="#444" /><rect x="5" y="1" width="10" height="8" fill="#4668c8" /><rect x="5" y="11" width="10" height="8" fill="#4668c8" /><path d="M7 5l6-2v5H8zM8 14l5 2-4 2z" fill="#d8702a" /><path d="M3 0v20M17 0v20" stroke="#fff" strokeWidth="1.500" strokeDasharray="2" /></Svg>,
  cdrive: <Svg s={16}><path d="M0 4h3v3H0zM4 3h4v4H4zM0 8h3v3H0zM4 8h4v4H4z" fill="#19b5f1" /><path d="M2 14l9-4 8 2v3l-9 4-8-3z" fill="#aeb3b7" /><path d="M12 9V5q2-4 5 0v5z" fill="#c4c8cb" /></Svg>,
  drive: <Svg s={16}><path d="M1 12l8-3 10 2v4l-9 4-9-4z" fill="#b4b6b8" /><path d="M1 12l9 3v4l-9-4z" fill="#444" /></Svg>,
  net: <Svg s={16}><circle cx="13" cy="8" r="7" fill="#4f9dc4" /><path d="M1 7l11 2v8L1 14z" fill="#35a5ec" stroke="#4681a2" /><path d="M5 17l6 1-1 2z" fill="#777" /></Svg>,
};
const NAV = [
  ["star", "Quick access", 0], ["desktop", "Desktop", 1, "pin"], ["down", "Downloads", 1, "pin"], ["doc", "Documents", 1, "pin"], ["pic", "Pictures", 1, "pin"],
  ["folder", "Export", 1], ["folder", "Export", 1], ["folder", "Models", 1], ["folder", "Models", 1],
  ["cloud", "OneDrive", 0], ["pc", "This PC", 0], ["cube", "3D Objects", 1], ["desktop", "Desktop", 1], ["doc", "Documents", 1], ["down", "Downloads", 1],
  ["music", "Music", 1], ["pic", "Pictures", 1], ["video", "Videos", 1], ["cdrive", "Windows (C:)", 1], ["drive", "Data (D:)", 1], ["net", "Network", 0],
];
const CRUMBS = ["Network", "isbprdfs03", "QA", "TestingProjects", "AlphaTesting", "CAE", "AutoPIPE", "AutoPIPERegression", "UIAutomation", "Discrepancies"];
const FILES = [["ComponentsDTP", "9/25/2019 11:26 AM"], ["DistributedLoad_DTP", "9/26/2019 12:07 PM"], ["ExportDXF", "9/26/2019 2:04 PM"], ["InsertAPModel", "9/26/2019 12:33 PM"], ["SaveAsNTL", "9/26/2019 2:04 PM"]];

/* ---------- taskbar ---------- */

const Taskbar = styled.footer`flex: none; display: flex; height: ${(p) => p.$h}px; color: #fff; background: linear-gradient(90deg, #1f2a29 0 55%, #18252a 60%, #1d1214 65% 77%, #1e2c2d 83%, #1d2423);`;
const StartButton = styled.button`width: ${(p) => p.$w}px; svg { width: ${(p) => p.$s}px; height: ${(p) => p.$s}px; }`;
const TaskSearch = styled.label`width: 430px; height: 50px; display: flex; align-items: center; gap: 10px; padding: 0 16px 0 11px; background: #f2f2f2; color: #333; font-size: 16px; input { flex: 1; min-width: 0; } input::placeholder { color: #333; opacity: 1; }`;
const TaskButton = styled.button`
  width: ${(p) => p.$w}px; && { margin-right: ${(p) => p.$g}px; }
  ${(p) => p.$run && css`&& { background: linear-gradient(#76b9ed, #76b9ed) 50% 100% / ${p.$active ? "100%" : "84%"} ${p.$bar}px no-repeat ${p.$active ? "#4a4a4b" : ""}; }`}
`;
const TaskIcon = ({ k, s }) => {
  if (k === "edge") return <Svg s={s} v={24}><path d="M2 11Q4 1 13 1q9 1 9 12H9q1 6 6 6 4 0 6-1v4q-3 2-8 2-8-1-8-9 0-5 4-7-4 0-7 3zM9 10h7q-1-4-4-4-3 1-3 4z" fill="#0078d7" /></Svg>;
  if (k === "ie") return <FaInternetExplorer size={s - 2} color="#4fc0ee" />;
  if (k === "skype") return <Svg s={s} v={24}><circle cx="11" cy="12" r="9" fill="#fff" /><FaSkype x="1" y="1" size={21} color="#00a4e4" /><circle cx="19" cy="19" r="5" fill="#6bb700" /><path d="M17 19l2 2 3-3" stroke="#fff" /></Svg>;
  if (k === "pipe") return <PipeMark s={s - 2} />;
  if (k === "gear") return <GearMark s={s - 2} />;
  if (k === "bentley") return <BentleyMark s={s} />;
  return <Svg s={s} v={24}>{TASKI[k]}</Svg>;
};
const TASKI = {
  view: <path d="M5 4v3h9V4M5 20v-3h9v3M5 9h9v6H5zM17 4v16" stroke="#fff" strokeWidth="1.2" />,
  circle: <circle cx="12" cy="12" r="8.500" stroke="#fff" strokeWidth="2" />,
  store: <g><path d="M8 7q0-5 4-5t4 5" stroke="#fff" strokeWidth="1.5" /><path d="M3 7h18v15H3z" fill="#fff" /><path d="M7 10h4v4H7z" fill="#f25022" /><path d="M12 10h4v4h-4z" fill="#7fba00" /><path d="M7 15h4v4H7z" fill="#00a4ef" /><path d="M12 15h4v4h-4z" fill="#ffb900" /></g>,
  mail: <g><path d="M1 9l11-7 11 7v12H1z" fill="#fff" /><path d="M4 9h17l-9 8-2-4z" fill="#1f2a29" /></g>,
  outlook: <g><path d="M1 4l12-2v19L1 19z" fill="#0072c6" /><path d="M13 5h9v12h-9z" fill="#fff" stroke="#0072c6" /><path d="M13 9l4 3 5-5" stroke="#0072c6" strokeWidth="1.500" /><ellipse cx="7" cy="11.500" rx="2.500" ry="3.200" stroke="#fff" strokeWidth="2" /><path d="M9 14h14v9H9z" fill="#eab36a" /><path d="M9 14l7 5 7-5" stroke="#fff" /></g>,
  teams: <g><circle cx="14" cy="4" r="3" fill="#7b83eb" /><circle cx="20" cy="6" r="2" fill="#5059c9" /><path d="M9 8h13v9q-3 6-8 5-5-1-5-6z" fill="#7b83eb" /><rect x="1" y="6" width="12" height="12" fill="#4b53bc" /><path d="M4 9h6M7 9v7" stroke="#fff" strokeWidth="1.800" /><circle cx="18" cy="18" r="5" fill="#6bb700" /><path d="M16 18l2 2 3-3" stroke="#fff" /></g>,
  chrome: <g><circle cx="12" cy="12" r="10" fill="#fbc116" /><path d="M12 12L3.300 7A10 10 0 0 1 20.700 7z" fill="#e33b2e" /><path d="M12 12L3.300 7A10 10 0 0 0 12 22l4-8z" fill="#2ba24c" /><circle cx="12" cy="12" r="5" fill="#fff" /><circle cx="12" cy="12" r="3.900" fill="#4285f4" /></g>,
  explorer: <g><path d="M2 3h8l2 2h10v15H2z" fill="#fcd667" /><path d="M2 8h20v12H2z" fill="#ffe9a0" /><path d="M6 13h12v9h-4v-5h-4v5H6z" fill="#3aa5e6" /></g>,
  note: <g><path d="M8 2h12l-5 18H3z" fill="#7fc1cf" /><path d="M20 2l2 3-5 17-2-2z" fill="#e6eef0" /><path d="M8 2h12l-1 3H7z" fill="#d5e4e8" /></g>,
  excel: <g><path d="M10 4h12v16H10z" fill="#fff" stroke="#1f7244" /><path d="M14 7h6M14 10h6M14 13h6M14 16h6" stroke="#1f7244" /><path d="M2 4l12-3v22L2 20z" fill="#1f7244" /><path d="M5 8l5 8M10 8l-5 8" stroke="#fff" strokeWidth="1.800" /></g>,
  people: <g><path d="M0 0h24v24H0z" fill="#0f4a8f" /><circle cx="12" cy="8" r="2.500" fill="#fff" /><circle cx="6" cy="11" r="2" fill="#fff" /><circle cx="18" cy="11" r="2" fill="#fff" /><path d="M9 20v-7q3-3 6 0v7zM3 20v-5q3-3 5 0v5zM16 20v-5q3-3 5 0v5z" fill="#fff" /></g>,
};
const APPS = ["edge", "store", "mail", "outlook", "teams", "pipe", "gear", "chrome", "explorer", "skype", "note", "excel", "ie", "people", "bentley"];
const Tray = styled.div`display: flex; align-items: center; gap: ${(p) => p.$gap}px; margin-left: auto; padding-right: ${(p) => p.$pr}px;`;
const Clock = styled.time`text-align: center; font-size: ${(p) => p.$s}px; line-height: ${(p) => p.$l}px; margin-left: 6px; white-space: pre;`;
const Notice = styled.button`position: relative; width: 28px; height: 30px; && { margin: 0 6px 0 10px; }`;
const Count = styled.span`position: absolute; right: -9px; bottom: -7px; width: 20px; height: 20px; border: 1px solid #888; border-radius: 50%; background: #333; font-size: 12px; line-height: 18px;`;

const Apps = ({ w, g, s, bar }) => APPS.map((k, i) => (
  <TaskButton key={k} aria-label={k} $w={w} $g={g} $bar={bar} $run={i > 1} $active={k === "bentley"}><TaskIcon k={k} s={s} /></TaskButton>
));

/* ---------- screens ---------- */

function AutoPipeWindow() {
  return (
    <>
      <TitleStrip>
        <QuickBar>
          <Svg s={18} v={32}><path d="M5 1h15l7 8v22H5z" fill="#fff" stroke="#aab" /><path d="M23 21v10M18 26h10" stroke="#4fa324" strokeWidth="5" /></Svg>
          <QuickGroup><BigFolder s={17} /><Caret /><BigFolder s={17} r /></QuickGroup>
        </QuickBar>
        <QuickMore aria-label="Customize"><Svg s={10} v={10}><path d="M2 1h6M3 5h4L5 8z" fill="#15428b" stroke="#15428b" /></Svg></QuickMore>
        <Spacer />
        <Controls />
      </TitleStrip>
      <Orb aria-label="Application menu"><PipeMark s={26} /></Orb>
      <TabStrip>
        <RibbonTab $on>File</RibbonTab><RibbonTab>Tools</RibbonTab><RibbonTab>Bentley Cloud Services</RibbonTab><RibbonTab>Help</RibbonTab>
      </TabStrip>
      <Ribbon>
        {GROUPS.map(([name, items]) => (
          <RibbonGroup key={name}>
            <GroupBody>
              {items.map(([icon, label, w, menu]) => (
                <BigButton key={label} $w={w}>{RIBBON[icon]}<span>{label}</span>{menu ? <Caret /> : null}</BigButton>
              ))}
            </GroupBody>
            <GroupName>{name}</GroupName>
          </RibbonGroup>
        ))}
      </Ribbon>
      <ToolDock>
        {ROWS.map((row) => (
          <ToolRow key={row}>
            {row.split(" ").map((n, i) => <button key={i} aria-label={n}><Glyph n={n} /></button>)}
            <Overflow><Caret $c="#fff" /></Overflow>
          </ToolRow>
        ))}
      </ToolDock>
      <CanvasFrame>
        <Canvas>
          <Axes width="100" height="76" viewBox="0 0 100 76">
            <path d="M48 47L16 28" stroke="#8f8f14" strokeWidth="3" /><path d="M2 20l14 2-5 9z" fill="#ff4" /><circle cx="15" cy="27" r="4" fill="#5c5208" />
            <path d="M48 47V27" stroke="#3c9a3c" strokeWidth="3" /><path d="M48 13l6 16H42z" fill="#4cff4c" />
            <path d="M48 47L34 55" stroke="#44f" strokeWidth="3" /><path d="M19 63l9-11h8l-1 9z" fill="#44f" />
            <path d="M48 47l14 8" stroke="#a11" strokeWidth="3" /><path d="M78 64L62 61v-8h7z" fill="#ff4c4c" />
            <g fontSize="10" fontFamily="Liberation Sans, sans-serif" fill="#000"><text x="47" y="9">Z</text><text x="3" y="17">N</text><text x="15" y="62">X</text><text x="82" y="62">Y</text></g>
          </Axes>
          <Cross width="24" height="24" viewBox="0 0 24 24" stroke="#333" fill="none"><path d="M2.500 2.500h19v19h-19zM12 5v14M5 12h14" /></Cross>
        </Canvas>
        <ScrollTrack $v><Chev /><Spacer $f={361} /><VThumb /><Spacer $f={355} /><Chev r={180} /></ScrollTrack>
        <ScrollTrack><Chev r={270} /><Spacer /><Chev r={90} /><Spacer $f="0 0 23px" /></ScrollTrack>
      </CanvasFrame>
      <StatusBar>
        <span>Command :</span><Spacer />
        <StatusCell $w={73} /><StatusCell $w={49} /><StatusCell $w={121} /><StatusCell $w={1} />
      </StatusBar>
      <FindSlot><Binoculars s={15} /></FindSlot>
      <Recorder>
        <TealButton aria-label="Test progress"><GearMark s={28} /></TealButton><Rule $h={34} />
        <Pause aria-label="Pause" /><Stop aria-label="Stop" />
      </Recorder>
      <Balloon>Waiting until the overlapped window becomes visible.<Progress />ImportExport-PXF_DTP</Balloon>
    </>
  );
}

function CommandSearch() {
  return (
    <Dialog $x={942} $y={174} $w={578} $h={85}>
      <DialogTitle><Binoculars s={20} /><h2>Command Search Utility</h2><WinControls $w={42}><button aria-label="Close"><CtlIcon k="x" /></button></WinControls></DialogTitle>
      <SearchLine><label htmlFor="cmd">Search:</label><Combo><input id="cmd" /><button aria-label="Open list"><Tri /></button></Combo></SearchLine>
    </Dialog>
  );
}

function ReviewData() {
  return (
    <Dialog $x={515} $y={768} $w={1012} $h={262}>
      <DialogTitle>
        <Svg s={18}><rect x="1" y="1" width="18" height="17" fill="#fff" stroke="#888" /><rect x="3" y="4" width="8" height="12" fill="#3c9074" /></Svg>
        <h2>Review Component Data</h2>
        <WinControls $w={60}><button aria-label="Maximize"><Dim><CtlIcon k="max" /></Dim></button><button aria-label="Close"><CtlIcon k="x" /></button></WinControls>
      </DialogTitle>
      <ReviewBody>
        <CaseTable>
          <colgroup>{CASES.map(([w], i) => <col key={i} width={w} />)}</colgroup>
          <thead><tr>{CASES.map(([, t], i) => <th key={i}>{t}</th>)}</tr></thead>
        </CaseTable>
        <OldScroll $v><button aria-label="Up"><Tri $r={180} /></button><span /><button aria-label="Down"><Tri /></button></OldScroll>
        <SheetTabs>
          <SheetNav>
            {["M6 4v12M14 5l-5 5 5 5z", "M13 5l-5 5 5 5z", "M8 5l5 5-5 5z", "M14 4v12M6 5l5 5-5 5z"].map((d, i) => (
              <button key={d} aria-label={`Scroll tabs ${i + 1}`}><Svg s={18}><path d={d} fill={i < 2 ? "#777" : "#000"} stroke={i < 2 ? "#777" : "#000"} strokeWidth="1.5" /></Svg></button>
            ))}
          </SheetNav>
          <SheetList>
            {["Pres/Temp/PipeID", "Pipe Properties", "Segment", "Point", "Anchor/NodeLink", "Support", "Tee", "Bend", "Valve"].map((t, i) => <SheetTab key={t} $on={i === 0}>{t}</SheetTab>)}
          </SheetList>
          <Spacer $f="0 0 3px" />
          <SheetScroll><button aria-label="Scroll left"><Tri $r={90} /></button><span /><button aria-label="Scroll right"><Tri $r={270} /></button></SheetScroll>
        </SheetTabs>
        <Corner />
      </ReviewBody>
    </Dialog>
  );
}

const RefreshIcon = styled(({ className, children }) => <Svg className={className} s={26}>{children}</Svg>)`margin-left: 14px;`;
const ViewLabel = styled.span`margin-left: 15px;`;

function ProjectChooser() {
  return (
    <Dialog $front $x={468} $y={235} $w={985} $h={553}>
      <DialogTitle $front>
        <BentleyMark s={20} /><h2>Project Chooser</h2>
        <WinControls $c="#000" $w={58}>
          <button aria-label="Minimize"><Dim><CtlIcon k="min" /></Dim></button><button aria-label="Maximize"><CtlIcon k="max" /></button><button aria-label="Close"><CtlIcon k="x" /></button>
        </WinControls>
      </DialogTitle>
      <ChooserBody>
        <ChooserBar>
          <BarButton><Svg s={27}><path d="M10 0v20M0 10h20" stroke="#000" strokeWidth="4.500" /></Svg>Register Project</BarButton>
          <Rule $h={30} />
          <BarButton>
            <RefreshIcon><path d="M3.500 14A7.500 7.500 0 0 1 15 4.500" stroke="#000" strokeWidth="3" /><path d="M12 7.500h6.500V1z" fill="#000" /><path d="M16.500 6A7.500 7.500 0 0 1 5 15.500" stroke="#888" strokeWidth="3" /><path d="M8 12.500H1.500V19z" fill="#555" /></RefreshIcon>Refresh
          </BarButton>
          <Rule $h={30} />
          <ViewLabel>View :</ViewLabel>
          <Segments>
            <Segment><Star s={26} />Favorites</Segment>
            <Segment $gap={16}><Svg s={26} v={26}><circle cx="13" cy="13" r="11" stroke="currentColor" strokeWidth="2" /><path d="M14 6v8h-4l4-5" stroke="currentColor" strokeWidth="2" /></Svg>Recent</Segment>
            <Segment $on $pl={12} $gap={11}><Svg s={18} v={18}><path d="M0 1h18M0 5h18M0 9h18M0 13h18M0 17h18" stroke="currentColor" strokeWidth="2" /></Svg>All</Segment>
          </Segments>
          <SearchBox><input placeholder="Search..." aria-label="Search" /><Svg s={20}><circle cx="8" cy="7" r="6" stroke="currentColor" strokeWidth="2" /><path d="M12 11l6 7" stroke="currentColor" strokeWidth="3" /></Svg></SearchBox>
        </ChooserBar>
        <ChooserHead>Select a CONNECT Project for the current Document
          <Svg s={22} v={22}><circle cx="11" cy="11" r="10" fill="#2a9df4" stroke="#8fccf7" strokeWidth="2" /><path d="M11 9v7M11 5v2M9 9.500h2M9 16h4" stroke="#fff" strokeWidth="2" /></Svg>
        </ChooserHead>
        <Grid>
          <GridView>
            <ProjectTable>
              <colgroup><col width="56" />{[188, 187, 188, 188, 188].map((w, i) => <col key={i} width={w} />)}</colgroup>
              <thead><tr><th /><th>Number</th><th>Name</th><th>Location</th><th>Industry</th><th>Asset Type</th></tr></thead>
              <tbody>
                {PROJECTS.map(([h, ...cells], i) => (
                  <ProjectRow key={i} $h={h} $on={i === 4}><td><Star s={18} /></td>{cells.map((c, j) => <td key={j}>{c}</td>)}</ProjectRow>
                ))}
              </tbody>
            </ProjectTable>
          </GridView>
          <VBar /><HBar />
        </Grid>
        <DialogButtons><button disabled>Associate</button><button>Cancel</button></DialogButtons>
      </ChooserBody>
    </Dialog>
  );
}

function LeftTaskbar() {
  return (
    <Taskbar $h={50}>
      <StartButton $w={60} $s={20} aria-label="Start"><FaWindows /></StartButton>
      <TaskSearch>
        <Svg s={28} v={28}><circle cx="14" cy="14" r="11.500" stroke="#000" strokeWidth="3" /></Svg>
        <input placeholder="Type here to search" aria-label="Type here to search" />
        <Svg s={22}><rect x="7" y="1" width="6" height="12" rx="1" stroke="#333" strokeWidth="1.5" /><path d="M3.500 9v5q0 2 3 2h7q3 0 3-2V9M10 16v4M7 19h6" stroke="#333" strokeWidth="1.5" /></Svg>
      </TaskSearch>
      <TaskButton $w={60} $g={4} aria-label="Task view"><TaskIcon k="view" s={26} /></TaskButton>
      <Apps w={60} g={2} s={30} bar={3} />
      <Tray $gap={10} $pr={5}>
        <Svg s={22}><circle cx="6" cy="9" r="3" stroke="#fff" /><circle cx="13" cy="4" r="3" stroke="#fff" /><path d="M1 18q0-6 5-6t5 6M10 11q3-4 6-3t3 5" stroke="#fff" /></Svg>
        <Spacer $f="0 0 6px" />
        <Chev s={20} w={1} />
        <Svg s={20}><rect x="4" y="6" width="15" height="9" stroke="#fff" /><path d="M6 8h11v5H6z" fill="#fff" /><path d="M1 4h4v5H1zM2 1v3M4 1v3" stroke="#fff" /></Svg>
        <Svg s={20}><circle cx="15" cy="16" r="1.5" fill="#fff" /><path d="M10 17q0-6 6-6M6 17Q6 7 16 7M2 17Q2 3 16 3" stroke="#bbb" strokeWidth="1.300" /></Svg>
        <Svg s={20}><path d="M1 7h3l4-4v14l-4-4H1z" stroke="#fff" /><path d="M11 8q1 2 0 4" stroke="#fff" /><path d="M13 6q3 4 0 8M16 4q4 6 0 12" stroke="#888" /></Svg>
        <Clock $s={14} $l={23}>{"2:23 PM\n9/26/2019"}</Clock>
        <Notice aria-label="Notifications"><Svg s={30}><path d="M1 2h18v13h-8l-4 4v-4H1z" fill="#fff" /><path d="M4 6h12M4 9h12M4 12h12" stroke="#222" /></Svg><Count>1</Count></Notice>
        <Rule $h={50} $c="#6d7473" />
      </Tray>
    </Taskbar>
  );
}

function Explorer() {
  return (
    <>
      <ExpTitle>
        <MiniFolder /><Rule $h={12} /><Svg s={16}><path d="M3 1h14v18H3z" fill="#fff" stroke="#888" strokeWidth="1.5" /><path d="M6 10l3 4 6-8" stroke="#e05a1c" strokeWidth="2" /></Svg><MiniFolder /><Caret $c="#222" /><Rule $h={12} />
        <h1>Discrepancies</h1><Controls $w={45} $h={20} />
      </ExpTitle>
      <ExpTabs><button>File</button><button>Home</button><button>Share</button><button>View</button><Spacer /><Chev r={180} w={1.2} /><Spacer $f="0 0 9px" /><Help aria-label="Help">?</Help></ExpTabs>
      <AddressRow>
        <button aria-label="Back"><Svg s={16}><path d="M19 10H2M9 3l-7 7 7 7" stroke="#666" strokeWidth="2" /></Svg></button>
        <button aria-label="Forward"><Svg s={16}><path d="M1 10h17M11 3l7 7-7 7" stroke="#ccc" strokeWidth="2" /></Svg></button>
        <SlimButton aria-label="History"><Chev s={9} r={180} /></SlimButton>
        <UpButton aria-label="Up"><Svg s={16}><path d="M10 19V2M3 9l7-7 7 7" stroke="#666" strokeWidth="2" /></Svg></UpButton>
        <Address aria-label="Path">
          <MiniFolder />
          {CRUMBS.map((c) => <React.Fragment key={c}><i><Chev s={8} r={90} /></i><a href="#path">{c}</a></React.Fragment>)}
          <AddressEnd><button aria-label="Previous locations"><Chev s={11} r={180} /></button><Spacer $f="0 0 4px" /><button aria-label="Refresh"><Svg s={13}><path d="M15 6A7 7 0 1 1 7 4.500" stroke="#555" strokeWidth="2.4" /><path d="M8 1l6 0v7z" fill="#555" /></Svg></button></AddressEnd>
        </Address>
        <ExpSearch><input placeholder="Search Discrepancies" aria-label="Search Discrepancies" /><Svg s={12}><circle cx="12" cy="7" r="5.500" stroke="#555" strokeWidth="2.4" /><path d="M8 11l-6 8" stroke="#555" strokeWidth="3" /></Svg></ExpSearch>
      </AddressRow>
      <ExpMain>
        <NavPane>
          {NAV.map(([icon, label, d, pin], i) => (
            <NavItem href="#nav" key={i} $d={d} $top={d === 0 && i > 0} $on={label === "Network"}>{NAVI[icon]}{label}{pin && <Pin />}</NavItem>
          ))}
        </NavPane>
        <ListPane>
          <FileTable>
            <colgroup><col width="258" /><col width="120" /><col width="120" /><col width="81" /></colgroup>
            <thead><tr><th>Name<Chev s={10} w={1} /></th><th>Date modified</th><th>Type</th><th>Size</th></tr></thead>
            <tbody>{FILES.map(([n, t], i) => <FileRow key={n} $on={i === 4}><td><FileName><MiniFolder />{n}</FileName></td><td>{t}</td><td>File folder</td><td /></FileRow>)}</tbody>
          </FileTable>
        </ListPane>
      </ExpMain>
      <ExpStatus>
        <span>5 items</span><span>1 item selected</span>
        <span>State:<Svg s={16}><circle cx="10" cy="10" r="10" fill="#46b036" /><path d="M5 10a5 5 0 0 1 9-3M15 10a5 5 0 0 1-9 3" stroke="#f6e24a" strokeWidth="2.4" /></Svg>Online</span>
        <ViewButtons>
          <button aria-label="Details"><Svg s={17}><path d="M1 2h5v5H1zM1 7h5v5H1zM1 12h5v5H1z" fill="#fff" stroke="#999" /><path d="M8 5h5M15 5h5M8 10h5M15 10h5M8 15h5M15 15h5" stroke="#666" strokeWidth="1.400" /></Svg></button>
          <button aria-label="Large icons">{NAVI.pic}</button>
        </ViewButtons>
      </ExpStatus>
    </>
  );
}

export default function App() {
  return (
    <Desktop>
      <Global />
      <Monitor $bg="#bfdbff">
        <AutoPipeWindow />
        <CommandSearch />
        <ReviewData />
        <ProjectChooser />
        <LeftTaskbar />
        <Pointer width="16" height="25" viewBox="0 0 16 25"><path d="M1 1v19l4-4 3 7 3-1-3-7h6z" fill="#fff" stroke="#000" /></Pointer>
      </Monitor>
      <Monitor>
        <Explorer />
        <Taskbar $h={40}>
          <StartButton $w={48} $s={16} aria-label="Start"><FaWindows /></StartButton>
          <TaskButton $w={48} $g={0} aria-label="Cortana"><TaskIcon k="circle" s={18} /></TaskButton>
          <TaskButton $w={48} $g={1} aria-label="Task view"><TaskIcon k="view" s={20} /></TaskButton>
          <Apps w={48} g={1} s={24} bar={2} />
          <Tray $gap={0} $pr={5}><Clock $s={11} $l={18}>{"2:23 PM\n9/26/2019"}</Clock></Tray>
        </Taskbar>
      </Monitor>
    </Desktop>
  );
}
